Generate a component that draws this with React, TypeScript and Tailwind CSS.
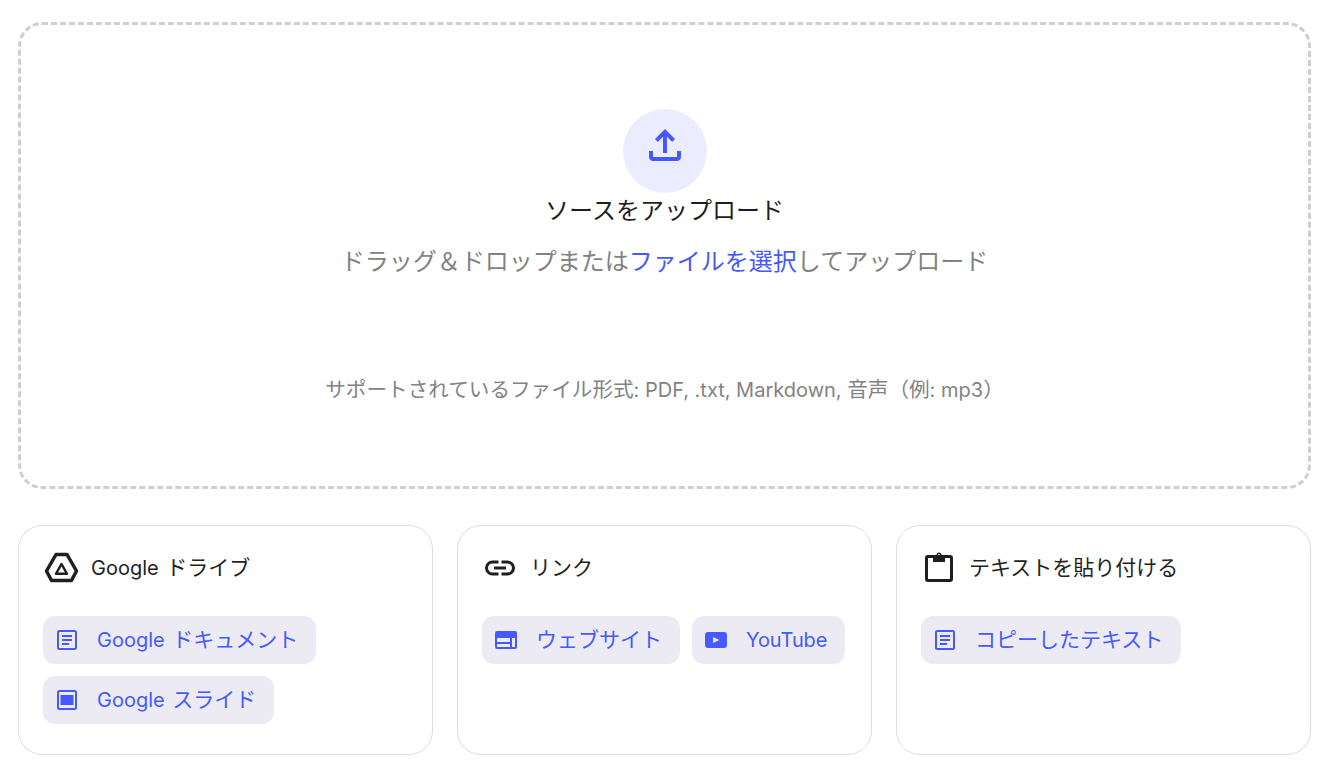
function L({ children }: { children: React.ReactNode }) {
  return <span className="text-[20px]">{children}</span>;
}
function G() {
  return <span className="text-[20px] mr-[2px]">Google </span>;
}

function DocIcon() {
  return (
    <svg viewBox="0 0 24 24" className="w-6 h-6 shrink-0" fill="none" stroke="currentColor">
      <rect x="3" y="3" width="18" height="18" rx="1.5" strokeWidth="2" />
      <path d="M7 8h10M7 12h10M7 16h7" strokeWidth="2" />
    </svg>
  );
}
function SlideIcon() {
  return (
    <svg viewBox="0 0 24 24" className="w-6 h-6 shrink-0" fill="none" stroke="currentColor">
      <rect x="3" y="3" width="18" height="18" rx="1.5" strokeWidth="2" />
      <rect x="5.5" y="7" width="13" height="10" fill="currentColor" stroke="none" />
    </svg>
  );
}
function WebIcon() {
  return (
    <svg viewBox="0 0 24 24" className="w-6 h-6 shrink-0" fill="currentColor">
      <path fillRule="evenodd" d="M3 3h18a2 2 0 0 1 2 2v14a2 2 0 0 1-2 2H3a2 2 0 0 1-2-2V5a2 2 0 0 1 2-2Zm0 7v4h13v-4H3Zm0 6v3h13v-3H3Zm15-6v9h3v-9h-3Z" />
    </svg>
  );
}
function PlayIcon() {
  return (
    <svg viewBox="0 0 24 24" className="w-6 h-6 shrink-0" fill="currentColor">
      <path fillRule="evenodd" d="M4 4h16a3 3 0 0 1 3 3v10a3 3 0 0 1-3 3H4a3 3 0 0 1-3-3V7a3 3 0 0 1 3-3Zm5 5v6l6.5-3L9 9Z" />
    </svg>
  );
}

function Chip({ icon, children }: { icon: React.ReactNode; children: React.ReactNode }) {
  return (
    <div className="flex items-center h-12 pl-3 pr-[18px] gap-[18px] rounded-xl bg-[#ecebf3] text-[#4659ff] text-[21px]">
      {icon}
      <span>{children}</span>
    </div>
  );
}

function Card({ icon, title, children }: { icon: React.ReactNode; title: React.ReactNode; children: React.ReactNode }) {
  return (
    <div className="flex-1 h-[230px] rounded-3xl border border-[#dddde9] px-6 pt-6">
      <div className="flex items-center h-[36px] gap-[12px] text-[21px] text-[#1f1f1f]">
        <span className="shrink-0 w-9 h-9 flex items-center justify-center">{icon}</span>
        <span>{title}</span>
      </div>
      <div className="flex flex-wrap gap-3 mt-[30px]">{children}</div>
    </div>
  );
}

export default function App() {
  return (
    <div
      className="w-[1334px] h-[782px] bg-white pl-[18px] pr-[23px] pt-[22px] overflow-hidden"
      style={{ fontFamily: 'Inter, "Noto Sans CJK JP", sans-serif' }}
    >
      <div className="h-[467px] rounded-3xl border-[3px] border-dashed border-[#cfcfcf] flex flex-col items-center pt-[84px]">
        <div className="w-[84px] h-[84px] pb-3 rounded-full bg-[#ebecff] flex items-center justify-center text-[#4659ff]">
          <svg viewBox="0 0 24 24" className="w-12 h-12" fill="currentColor">
            <path d="M11 16V7.85l-2.6 2.6L7 9l5-5 5 5-1.4 1.45-2.6-2.6V16h-2Zm-5 4c-.55 0-1.02-.2-1.41-.59S4 18.55 4 18v-3h2v3h12v-3h2v3c0 .55-.2 1.02-.59 1.41S18.55 20 18 20H6Z" />
          </svg>
        </div>
        <div className="text-[24px] leading-[36px] text-[#1f1f1f]">ソースをアップロード</div>
        <div className="mt-[15px] text-[24px] leading-[36px] text-[#828282]">
          ドラッグ＆ドロップまたは<span className="text-[#4659ff]">ファイルを選択</span>してアップロード
        </div>
        <div className="mt-[96px] text-[20.6px] leading-[28px] text-[#828282]">
          サポートされているファイル形式<L>: PDF, .txt, Markdown, </L>音声（例<L>: mp3</L>）
        </div>
      </div>
      <div className="flex gap-6 mt-9">
        <Card
          title={<><G />ドライブ</>}
          icon={
            <svg viewBox="0 0 36 36" className="w-9 h-9" fill="none" stroke="#1f1f1f" strokeWidth="3.5" strokeLinejoin="round">
              <path d="M13 4.5h11L33.5 21L28.5 30.5H8.5L3.5 21Z" />
              <path d="M18.5 14L24 23.75H13Z" strokeWidth="2.5" />
            </svg>
          }
        >
          <Chip icon={<DocIcon />}><G />ドキュメント</Chip>
          <Chip icon={<SlideIcon />}><G />スライド</Chip>
        </Card>
        <Card
          title="リンク"
          icon={
            <svg viewBox="0 0 24 24" className="w-9 h-9" fill="#1f1f1f">
              <path d="M7 17q-2.07 0-3.54-1.46T2 12q0-2.07 1.46-3.54T7 7h4v2H7q-1.25 0-2.13.88T4 12q0 1.25.88 2.13T7 15h4v2H7Zm1-4v-2h8v2H8Zm5 4v-2h4q1.25 0 2.13-.88T20 12q0-1.25-.88-2.13T17 9h-4V7h4q2.07 0 3.54 1.46T22 12q0 2.07-1.46 3.54T17 17h-4Z" />
            </svg>
          }
        >
          <Chip icon={<WebIcon />}>ウェブサイト</Chip>
          <Chip icon={<PlayIcon />}><span className="text-[20px] tracking-[-0.1px]">YouTube</span></Chip>
        </Card>
        <Card
          title="テキストを貼り付ける"
          icon={
            <svg viewBox="0 0 36 36" className="w-9 h-9" fill="none" stroke="#1f1f1f" strokeWidth="3">
              <rect x="5.5" y="6.5" width="25" height="24" rx="1.5" />
              <path d="M12 5h12v7H12Z" fill="#1f1f1f" stroke="none" />
              <circle cx="18" cy="5" r="2.5" fill="#1f1f1f" stroke="none" />
              <circle cx="18" cy="4.5" r="0.8" fill="#ffffff" stroke="none" />
            </svg>
          }
        >
          <Chip icon={<DocIcon />}>コピーしたテキスト</Chip>
        </Card>
      </div>
    </div>
  );
}
